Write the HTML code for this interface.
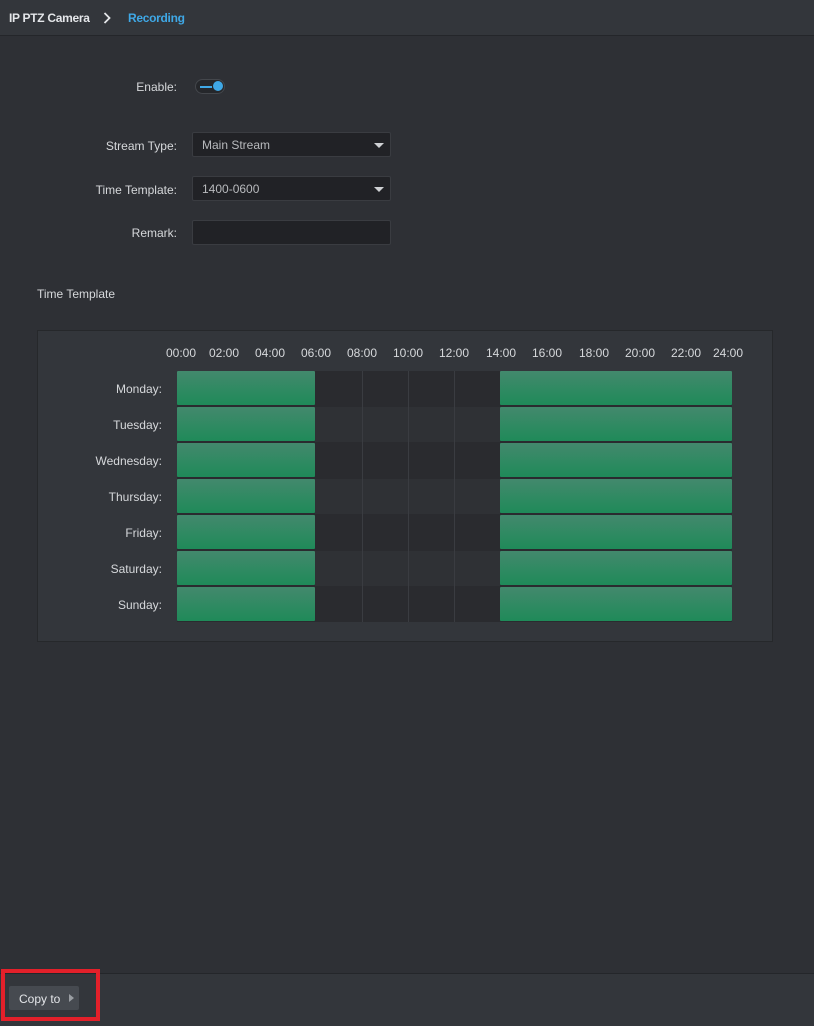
<!DOCTYPE html><html><head><style>
body{margin:0;width:814px;height:1025px;background:#2e3035;font-family:"Liberation Sans",sans-serif;font-size:12px;color:#d6d8db;position:relative;overflow:hidden}
.a{position:absolute}
.lbl{position:absolute;right:637px;text-align:right;white-space:nowrap}
.sel{position:absolute;left:192px;width:199px;height:25px;background:#212226;border:1px solid #3a3c41;box-sizing:border-box;border-radius:2px;color:#b8babd;line-height:24px;padding-left:9px}
.dd:after{content:"";position:absolute;right:6px;top:10px;border:5px solid transparent;border-top:5px solid #cfd1d4}
.day{position:absolute;right:652px;white-space:nowrap}
.g{position:absolute;background:linear-gradient(#43896d,#1f8a59);border-radius:1px}
.t{position:absolute;top:346px;width:40px;text-align:center;margin-left:-20px}
</style></head><body>
<div class="a" style="left:0;top:0;width:814px;height:35px;background:#33363b;border-bottom:1px solid #24262a"></div>
<div class="a" style="left:9px;top:11px;font-weight:bold;color:#e4e6e9;letter-spacing:-0.3px">IP PTZ Camera</div>
<svg class="a" style="left:103px;top:12px" width="8" height="12" viewBox="0 0 8 12"><path d="M1.5 1 L6.5 6 L1.5 11" fill="none" stroke="#e4e6e9" stroke-width="1.8"/></svg>
<div class="a" style="left:128px;top:11px;font-weight:bold;color:#3fa8e6;letter-spacing:-0.3px">Recording</div>
<div class="lbl" style="top:80px">Enable:</div>
<div class="a" style="left:195px;top:79px;width:30px;height:15px;border-radius:8px;background:#25272b;border:1px solid #44474c;box-sizing:border-box"></div>
<div class="a" style="left:200px;top:86px;width:12px;height:2px;background:#3fa8e6"></div>
<div class="a" style="left:213px;top:81px;width:10px;height:10px;border-radius:50%;background:#3fa8e6"></div>
<div class="lbl" style="top:139px">Stream Type:</div>
<div class="sel dd" style="top:132px">Main Stream</div>
<div class="lbl" style="top:183px">Time Template:</div>
<div class="sel dd" style="top:176px">1400-0600</div>
<div class="lbl" style="top:226px">Remark:</div>
<div class="sel" style="top:220px;padding:0"></div>
<div class="a" style="left:37px;top:287px">Time Template</div>
<div class="a" style="left:37px;top:330px;width:736px;height:312px;background:#33363b;border:1px solid #26282b;box-sizing:border-box"></div>
<div class="t" style="left:181px">00:00</div><div class="t" style="left:224px">02:00</div><div class="t" style="left:270px">04:00</div><div class="t" style="left:316px">06:00</div><div class="t" style="left:362px">08:00</div><div class="t" style="left:408px">10:00</div><div class="t" style="left:454px">12:00</div><div class="t" style="left:501px">14:00</div><div class="t" style="left:547px">16:00</div><div class="t" style="left:594px">18:00</div><div class="t" style="left:640px">20:00</div><div class="t" style="left:686px">22:00</div><div class="t" style="left:728px">24:00</div>
<div class="a" style="left:177px;top:371px;width:555px;height:251px;background:#2a2b2f"></div>
<div class="a" style="left:315px;top:407px;width:185px;height:35px;background:#2f3135"></div>
<div class="a" style="left:315px;top:479px;width:185px;height:35px;background:#2f3135"></div>
<div class="a" style="left:315px;top:551px;width:185px;height:35px;background:#2f3135"></div>
<div class="a" style="left:362px;top:371px;width:1px;height:251px;background:#3a3c41"></div>
<div class="a" style="left:408px;top:371px;width:1px;height:251px;background:#3a3c41"></div>
<div class="a" style="left:454px;top:371px;width:1px;height:251px;background:#3a3c41"></div>
<div class="day" style="top:382px">Monday:</div><div class="day" style="top:418px">Tuesday:</div><div class="day" style="top:454px">Wednesday:</div><div class="day" style="top:490px">Thursday:</div><div class="day" style="top:526px">Friday:</div><div class="day" style="top:562px">Saturday:</div><div class="day" style="top:598px">Sunday:</div>
<div class="g" style="left:177px;top:371px;width:138px;height:34px"></div><div class="g" style="left:500px;top:371px;width:232px;height:34px"></div>
<div class="g" style="left:177px;top:407px;width:138px;height:34px"></div><div class="g" style="left:500px;top:407px;width:232px;height:34px"></div>
<div class="g" style="left:177px;top:443px;width:138px;height:34px"></div><div class="g" style="left:500px;top:443px;width:232px;height:34px"></div>
<div class="g" style="left:177px;top:479px;width:138px;height:34px"></div><div class="g" style="left:500px;top:479px;width:232px;height:34px"></div>
<div class="g" style="left:177px;top:515px;width:138px;height:34px"></div><div class="g" style="left:500px;top:515px;width:232px;height:34px"></div>
<div class="g" style="left:177px;top:551px;width:138px;height:34px"></div><div class="g" style="left:500px;top:551px;width:232px;height:34px"></div>
<div class="g" style="left:177px;top:587px;width:138px;height:34px"></div><div class="g" style="left:500px;top:587px;width:232px;height:34px"></div>
<div class="a" style="left:0;top:973px;width:814px;height:52px;background:#33363b;border-top:1px solid #24262a"></div>
<div class="a" style="left:9px;top:986px;width:70px;height:24px;background:#464a50;border-radius:2px"></div>
<div class="a" style="left:19px;top:992px;color:#e4e6e9">Copy to</div>
<div class="a" style="left:69px;top:994px;border:4px solid transparent;border-left:5px solid #9a9ea3"></div>
<div class="a" style="left:1px;top:969px;width:99px;height:52px;border:4px solid #e3202a;box-sizing:border-box"></div>
</body></html>
